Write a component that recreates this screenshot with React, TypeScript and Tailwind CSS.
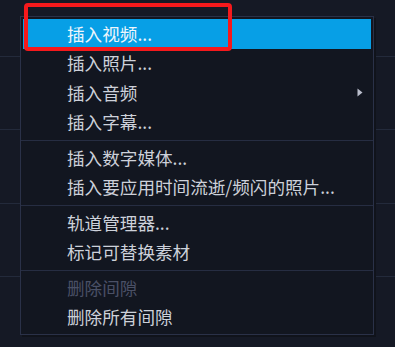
type Item = { label: string; disabled?: boolean; active?: boolean; submenu?: boolean };

const groups: Item[][] = [
  [
    { label: "插入视频...", active: true },
    { label: "插入照片..." },
    { label: "插入音频", submenu: true },
    { label: "插入字幕..." },
  ],
  [{ label: "插入数字媒体..." }, { label: "插入要应用时间流逝/频闪的照片..." }],
  [{ label: "轨道管理器..." }, { label: "标记可替换素材" }],
  [{ label: "删除间隙", disabled: true }, { label: "删除所有间隙" }],
];

const MenuRow = ({ item }: { item: Item }) => {
  const color = item.active
    ? "bg-[#079fe6] text-[#eef6fc]"
    : item.disabled
      ? "text-[#4a5066]"
      : "text-[#cdd1da]";
  return (
    <div className={`flex h-[29.5px] items-center justify-between pl-[44px] pr-[8px] ${color}`}>
      <span className="whitespace-nowrap leading-none">{item.label}</span>
      {item.submenu && (
        <svg width="6" height="9" viewBox="0 0 6 9">
          <path d="M0.5 0.5 L5.5 4.5 L0.5 8.5 Z" fill="#b9bdcb" />
        </svg>
      )}
    </div>
  );
};

export default function App() {
  return (
    <div
      className="relative h-[347px] w-[395px] overflow-hidden bg-[#151925]"
      style={{ fontFamily: '"Noto Sans CJK SC", "Noto Sans", sans-serif' }}
    >
      {/* track rows behind the menu */}
      <div className="flex flex-col">
        <div className="h-[57px] border-b border-[#232a3b]" />
        <div className="h-[73px] border-b border-[#232a3b]" />
        <div className="h-[74px] border-b border-[#232a3b]" />
        <div className="h-[73px] border-b border-[#232a3b]" />
      </div>

      {/* context menu */}
      <div className="absolute left-[20px] top-[16px] w-[354px] border border-[#2a3148] bg-[#121620] p-[2px] text-[17.6px] shadow-[2px_2px_0_#10131b]">
        {groups.map((g, gi) => (
          <div key={gi}>
            {gi > 0 && <div className="-mx-[2px] my-[2.5px] h-px bg-[#262d42]" />}
            {g.map((item) => (
              <MenuRow key={item.label} item={item} />
            ))}
          </div>
        ))}
      </div>

      {/* red annotation box */}
      <div className="absolute left-[24px] top-[3px] h-[48px] w-[208px] rounded-[4px] border-4 border-[#f5191c]" />
    </div>
  );
}
